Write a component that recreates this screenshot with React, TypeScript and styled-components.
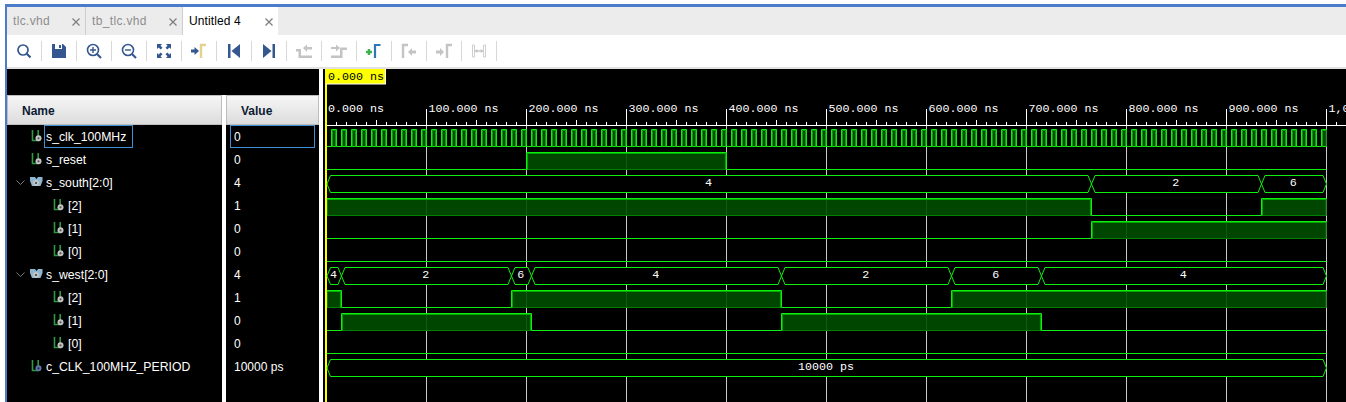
import React from "react";
import styled, { createGlobalStyle } from "styled-components";

const Global = createGlobalStyle`
  html, body { margin: 0; padding: 0; background: #fff; overflow: hidden; }
  body { font-family: "Liberation Sans", Arial, sans-serif; font-size: 12px; }
`;

const Page = styled.div`
  width: 1346px; height: 402px; box-sizing: border-box; padding: 4px 0 0 5px; background: #fff; overflow: hidden;
`;
const Frame = styled.div`
  height: 398px; box-sizing: border-box; border-top: 3px solid #4a7cc9; border-left: 2px solid #4a7cc9;
  display: flex; flex-direction: column;
`;
const TabBar = styled.div`
  height: 28px; flex: none; display: flex; background: #ececec;
`;
const Tab = styled.div<{ $width: number; $active?: boolean }>`
  width: ${p => p.$width}px; box-sizing: border-box; display: flex; align-items: center; justify-content: space-between;
  padding: 0 5px 0 6px; background: ${p => (p.$active ? "#fff" : "transparent")};
  color: ${p => (p.$active ? "#000" : "#8c8c8c")};
  letter-spacing: ${p => (p.$active ? "0.1px" : "0.35px")};
  border-right: ${p => (p.$active ? "0" : "1px solid #cfcfcf")};
`;
const TabLabel = styled.span`
  position: relative; top: 0;
`;
const CloseIcon = styled.svg`
  width: 8px; height: 8px; flex: none; margin-top: 2px;
`;
const Toolbar = styled.div`
  height: 32px; flex: none; display: flex; align-items: center; background: #fff;
  border-bottom: 2px solid #e2e2e2; box-sizing: content-box;
`;
const ToolButton = styled.div`
  width: 35px; height: 20px; box-sizing: border-box; flex: none; display: flex; align-items: center; justify-content: center;
  border-right: 1px solid #d8d8d8; padding-right: 1px;
`;
const ToolIcon = styled.svg`
  width: 16px; height: 16px; display: block;
`;
const Main = styled.div`
  flex: 1; min-height: 0; display: flex; background: #000;
`;
const SignalPane = styled.div`
  width: 312px; flex: none; display: flex; flex-direction: column;
`;
const TopStrip = styled.div`
  height: 26px; flex: none; background: #000;
`;
const Columns = styled.div`
  flex: 1; display: flex; background: #fff;
`;
const Column = styled.div<{ $width: number }>`
  width: ${p => p.$width}px; flex: none; background: #000; color: #fff;
`;
const Sash = styled.div`
  width: 4px; flex: none; background: #fff;
`;
const ColumnHeader = styled.div<{ $indent: number }>`
  height: 30px; box-sizing: border-box; display: flex; align-items: center; padding: 2px 0 0 ${p => p.$indent}px;
  font-weight: bold; color: #0c1a33;
  background: linear-gradient(#f6f6f6, #dcdcdc); border: 1px solid #bdbdbd;
`;
const NameRow = styled.div<{ $level: number }>`
  height: 23px; display: flex; align-items: center; padding-left: ${p => (p.$level ? 46 : 9)}px;
`;
const ChevronSlot = styled.div`
  width: 15px; flex: none; display: flex; align-items: center;
`;
const ChevronIcon = styled.svg`
  width: 9px; height: 6px; display: block;
`;
const SignalIcon = styled.svg`
  width: 15px; height: 13px; flex: none; display: block; margin-top: -2px; overflow: visible;
`;
const NameLabel = styled.span<{ $selected?: boolean }>`
  height: 23px; box-sizing: border-box; display: flex; align-items: center; padding: 0 6px 0 1px;
  border: 1px solid ${p => (p.$selected ? "#3f8fd2" : "transparent")};
  margin-left: -2px; white-space: nowrap; font-size: 12.25px;
`;
const ValueRow = styled.div<{ $selected?: boolean }>`
  height: 23px; box-sizing: border-box; margin: 0 4px; padding-left: 3px; display: flex; align-items: center;
  border: 1px solid ${p => (p.$selected ? "#3f8fd2" : "transparent")};
`;
const WavePane = styled.div`
  flex: 1; min-width: 0; background: #fff; padding-left: 4px; display: flex;
`;
const WaveSvg = styled.svg`
  display: block; width: 1023px; height: 333px; background: #000; flex: none;
`;
const MonoText = styled.text<{ $fill?: string }>`
  font-family: "Liberation Mono", "Courier New", monospace; font-size: 11.67px; fill: ${p => p.$fill ?? "#fff"};
`;

const BLUE = "#34578f";
const GRAY = "#c4c4c4";
const GOLD = "#e3d28d";

const toolIcons: React.ReactNode[] = [
  <g fill="none" stroke={BLUE} strokeWidth="1.7"><circle cx="7" cy="7" r="5" /><path d="M10.8 10.8 14.5 14.5" strokeWidth="2.2" /></g>,
  <g><path d="M1 1h11l3 3v11H1z" fill={BLUE} /><rect x="4" y="1" width="7" height="5" fill="#fff" /><rect x="8" y="2" width="2" height="3" fill={BLUE} /></g>,
  <g fill="none" stroke={BLUE} strokeWidth="1.6"><circle cx="7" cy="7" r="5.5" /><path d="M11 11 15 15" strokeWidth="2.2" /><path d="M4 7h6M7 4v6" strokeWidth="1.4" /></g>,
  <g fill="none" stroke={BLUE} strokeWidth="1.6"><circle cx="7" cy="7" r="5.5" /><path d="M11 11 15 15" strokeWidth="2.2" /><path d="M4 7h6" strokeWidth="1.4" /></g>,
  <g fill={BLUE}><path d="M1 1h5L4.5 2.7 6.5 4.7 4.7 6.5 2.7 4.5 1 6zM15 1v5L13.3 4.5 11.3 6.5 9.5 4.7 11.5 2.7 10 1zM1 15v-5l1.7 1.5 2-2 1.8 1.8-2 2L6 15zM15 15h-5l1.5-1.7-2-2 1.8-1.8 2 2L15 10z" /></g>,
  <g><path d="M0 6.5h3.5V4L8 8l-4.500 4V9.500H0z" fill={BLUE} /><path d="M10 15V2h5" fill="none" stroke={GOLD} strokeWidth="2.4" /></g>,
  <g fill={BLUE}><rect x="2" y="1" width="2.500" height="14" /><path d="M14 1v14L5.500 8z" /></g>,
  <g fill={BLUE}><rect x="11.500" y="1" width="2.500" height="14" /><path d="M2 1v14L10.500 8z" /></g>,
  <g fill={GRAY}><path d="M0 6h5v6.500h11v2.500H2.500V8.500H0z" /><path d="M7 5 11 1.500V4h5v2.500h-5V9z" /></g>,
  <g fill={GRAY}><path d="M0 4h5V1.500L9 5 5 8.500V6H0z" /><path d="M0 12.500h9V4.500h7V7h-4.500v8H0z" /></g>,
  <g><path d="M0 9h6M3 6v6" stroke="#3fb24f" strokeWidth="2.400" fill="none" /><path d="M9 15V2h5.500" fill="none" stroke="#2f78b5" strokeWidth="2.200" /></g>,
  <g><path d="M2 15V2h5" fill="none" stroke={GRAY} strokeWidth="2.400" /><path d="M15 7.500h-4V5L7 9l4 4v-2.500h4z" fill={GRAY} /></g>,
  <g><path d="M0 7.500h4V5l4 4-4 4v-2.500H0z" fill={GRAY} /><path d="M11 15V2h5" fill="none" stroke={GRAY} strokeWidth="2.400" /></g>,
  <g fill="none" stroke="#cfcfcf"><path d="M1.500 2h2v12h-2zM12.500 2h2v12h-2z" strokeWidth="1" /><path d="M4.500 8h7" strokeWidth="1" stroke="#aaa" /><path d="M6 6.500 4.500 8 6 9.500M10 6.500 11.500 8 10 9.500" strokeWidth="1" stroke="#aaa" /></g>,
];

type Kind = "bit" | "bus" | "const";
const Glyph = ({ kind }: { kind: Kind }) => (
  <SignalIcon viewBox="0 0 15 13">
    {kind === "bus" ? (
      <g>
        <path d="M-1 2h5l1.500 2 1.500-2h4.500v4l-2 5H1l-2-5z" fill="#8cb6cf" />
        <circle cx="5" cy="8" r="3" fill="#c4c4c4" />
        <circle cx="5" cy="8" r="1.100" fill="#444" />
      </g>
    ) : (
      <g>
        <path d="M1.500 1v10.500H7.200V1" fill="none" stroke="#2f9a45" strokeWidth="1.600" />
        <circle cx="7.500" cy="9.300" r="3" fill={kind === "const" ? "#5d77a8" : "#c4c4c4"} />
        <circle cx="7.500" cy="9.300" r="1.100" fill={kind === "const" ? "#1d2c4c" : "#555"} />
      </g>
    )}
  </SignalIcon>
);

const rows: { name: string; value: string; level: number; kind: Kind; open?: boolean; selected?: boolean }[] = [
  { name: "s_clk_100MHz", value: "0", level: 0, kind: "bit", selected: true },
  { name: "s_reset", value: "0", level: 0, kind: "bit" },
  { name: "s_south[2:0]", value: "4", level: 0, kind: "bus", open: true },
  { name: "[2]", value: "1", level: 1, kind: "bit" },
  { name: "[1]", value: "0", level: 1, kind: "bit" },
  { name: "[0]", value: "0", level: 1, kind: "bit" },
  { name: "s_west[2:0]", value: "4", level: 0, kind: "bus", open: true },
  { name: "[2]", value: "1", level: 1, kind: "bit" },
  { name: "[1]", value: "0", level: 1, kind: "bit" },
  { name: "[0]", value: "0", level: 1, kind: "bit" },
  { name: "c_CLK_100MHZ_PERIOD", value: "10000 ps", level: 0, kind: "const" },
];

const START = 327;
const END = 1326.5;
const LIME = "#0fee0f";
const MID = "#00a800";
const DARK = "#007f00";
const FILL = "rgba(0,78,0,0.9)";
const top = (k: number) => 129.5 + 23 * k;

const Digital = ({ row, highs }: { row: number; highs: [number, number][] }) => {
  const t = top(row);
  const b = t + 17;
  const lows: string[] = [];
  let cur = START;
  highs.forEach(([a, c]) => {
    if (a > cur) lows.push(`M${cur} ${b}H${a}`);
    cur = c;
  });
  if (cur < END) lows.push(`M${cur} ${b}H${END}`);
  return (
    <g fill="none">
      {highs.map(([a, c], i) => {
        const leftEdge = a > START;
        const rightEdge = c < END - 1;
        return (
          <g key={i}>
            <rect x={a} y={t} width={c - a} height={17} fill={FILL} />
            <path d={`M${a} ${b}H${c}`} stroke={c - a < 10 ? LIME : DARK} />
            {!leftEdge && <path d={`M${a + 0.5} ${t}V${b}`} stroke={DARK} />}
            {!rightEdge && <path d={`M${c - 0.5} ${t}V${b}`} stroke={DARK} />}
            <path
              d={`${leftEdge ? `M${a + 1} ${b}V${t + 1}` : `M${a} ${t + 1}`}H${rightEdge ? c - 1 : c}${rightEdge ? `V${b}` : ""}`}
              stroke={MID}
            />
            <path
              d={`${leftEdge ? `M${a} ${b}V${t}` : `M${a} ${t}`}H${c}${rightEdge ? `V${b}` : ""}`}
              stroke={LIME}
            />
          </g>
        );
      })}
      {lows.length > 0 && <path d={lows.join("")} stroke={LIME} />}
    </g>
  );
};

const Bus = ({ row, segs }: { row: number; segs: [string, number][] }) => {
  const t = top(row);
  const b = t + 17;
  const m = t + 8.5;
  let d = `M${START} ${m}L${START + 3.5} ${t}`;
  let bot = `M${START} ${m}L${START + 3.5} ${b}`;
  const labels: { v: string; x: number }[] = [];
  let prev = START;
  segs.forEach(([v, end], i) => {
    const last = i === segs.length - 1;
    const ex = last ? END : end;
    d += `H${ex - 3.5}`;
    bot += `H${ex - 3.5}`;
    if (last) {
      d += `L${ex} ${m}`;
      bot += `L${ex} ${m}`;
    } else {
      d += `L${ex + 3.5} ${b}M${ex + 3.5} ${t}`;
      bot += `L${ex + 3.5} ${t}M${ex + 3.5} ${b}`;
    }
    labels.push({ v, x: (prev + ex) / 2 - 0.7 });
    prev = ex;
  });
  const poly = `M${START} ${m}L${START + 3.5} ${t}H${END - 3.5}L${END} ${m}L${END - 3.5} ${b}H${START + 3.5}Z`;
  return (
    <g>
      <path d={poly} fill="#000" />
      <path d={d + bot} fill="none" stroke={LIME} />
      {labels.map((l, i) => (
        <MonoText key={i} x={l.x} y={m + 1.5} textAnchor="middle">{l.v}</MonoText>
      ))}
    </g>
  );
};

const clock: [number, number][] = Array.from({ length: 100 }, (_, i) => [331.5 + 10 * i, 336.5 + 10 * i] as [number, number]);
const ticks = Array.from({ length: 103 }, (_, i) => i);
const majors = Array.from({ length: 11 }, (_, i) => i);
const rulerLabel = (i: number) => (i === 10 ? "1,000.000 ns" : `${i * 100}.000 ns`);

const Waves = () => (
  <WaveSvg viewBox="323 69 1023 333">
    <rect x="325" y="69" width="2" height="333" fill="#ffff00" />
    {majors.filter(i => i > 0).map(i => (
      <path key={i} d={`M${326.5 + i * 100} 125V402`} stroke="#c8c8c8" fill="none" />
    ))}
    <path d="M327 125.500H1346" stroke="#fff" fill="none" />
    {ticks.filter(i => i > 0).map(i => (
      <path
        key={i}
        d={`M${326.5 + i * 10} ${i % 10 === 0 ? 109 : i % 5 === 0 ? 120 : 122}V125`}
        stroke="#fff"
        fill="none"
      />
    ))}
    {majors.map(i => (
      <MonoText key={i} x={328 + i * 100 + (i ? 0.5 : 0)} y={112}>{rulerLabel(i)}</MonoText>
    ))}
    <Digital row={0} highs={clock} />
    <Digital row={1} highs={[[526.5, 726.5]]} />
    <Bus row={2} segs={[["4", 1091.5], ["2", 1261.5], ["6", END]]} />
    <Digital row={3} highs={[[START, 1091.5], [1261.5, END]]} />
    <Digital row={4} highs={[[1091.5, END]]} />
    <Digital row={5} highs={[]} />
    <Bus row={6} segs={[["4", 341.5], ["2", 511.5], ["6", 531.5], ["4", 781.5], ["2", 951.5], ["6", 1041.5], ["4", END]]} />
    <Digital row={7} highs={[[START, 341.5], [511.5, 781.5], [951.5, END]]} />
    <Digital row={8} highs={[[341.5, 531.5], [781.5, 1041.5]]} />
    <Digital row={9} highs={[]} />
    <Bus row={10} segs={[["10000 ps", END]]} />
    <rect x="325.500" y="69" width="60.500" height="15.500" fill="#fff" />
    <rect x="325" y="69" width="60" height="14.500" fill="#ffff00" />
    <MonoText x="328" y="80" $fill="#000">0.000 ns</MonoText>
  </WaveSvg>
);

const tabs = [
  { label: "tlc.vhd", width: 79 },
  { label: "tb_tlc.vhd", width: 97 },
  { label: "Untitled 4", width: 95, active: true },
];

export default function App() {
  return (
    <Page>
      <Global />
      <Frame>
        <TabBar>
          {tabs.map(t => (
            <Tab key={t.label} $width={t.width} $active={t.active}>
              <TabLabel>{t.label}</TabLabel>
              <CloseIcon viewBox="0 0 8 8">
                <path d="M.5.5l7 7M7.500.5l-7 7" stroke="#7d7d7d" strokeWidth="1.200" fill="none" />
              </CloseIcon>
            </Tab>
          ))}
        </TabBar>
        <Toolbar>
          {toolIcons.map((icon, i) => (
            <ToolButton key={i}>
              <ToolIcon viewBox="0 0 16 16">{icon}</ToolIcon>
            </ToolButton>
          ))}
        </Toolbar>
        <Main>
          <SignalPane>
            <TopStrip />
            <Columns>
              <Column $width={215}>
                <ColumnHeader $indent={14}>Name</ColumnHeader>
                {rows.map((r, i) => (
                  <NameRow key={i} $level={r.level}>
                    {!r.level && (
                      <ChevronSlot>
                        {r.open && (
                          <ChevronIcon viewBox="0 0 9 6">
                            <path d="M.5.500l4 4 4-4" stroke="#7a7a7a" fill="none" />
                          </ChevronIcon>
                        )}
                      </ChevronSlot>
                    )}
                    <Glyph kind={r.kind} />
                    <NameLabel $selected={r.selected}>{r.name}</NameLabel>
                  </NameRow>
                ))}
              </Column>
              <Sash />
              <Column $width={93}>
                <ColumnHeader $indent={14}>Value</ColumnHeader>
                {rows.map((r, i) => (
                  <ValueRow key={i} $selected={r.selected}>{r.value}</ValueRow>
                ))}
              </Column>
            </Columns>
          </SignalPane>
          <WavePane>
            <Waves />
          </WavePane>
        </Main>
      </Frame>
    </Page>
  );
}
